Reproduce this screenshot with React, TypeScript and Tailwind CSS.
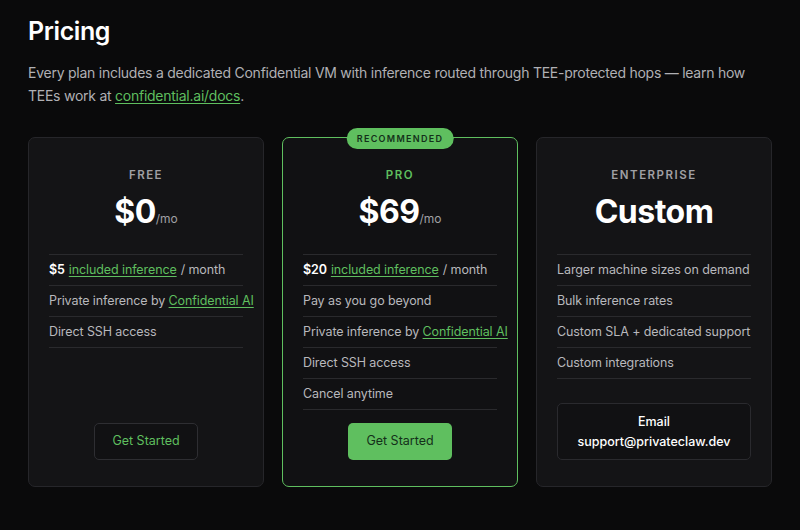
import React from "react";

const G = "text-[#5fbf5f]";

function Row({ children }: { children: React.ReactNode }) {
  return (
    <div className="border-b border-[#2a2a2d] h-[31px] leading-[30px] whitespace-nowrap text-[12.5px] tracking-[-0.1px] text-[#b8b8bc]">
      {children}
    </div>
  );
}

function Link({ children }: { children: React.ReactNode }) {
  return <span className={`${G} underline underline-offset-2`}>{children}</span>;
}

export default function App() {
  return (
    <div className="w-[800px] h-[530px] bg-[#0a0a0b] px-[28px] pt-[14px] overflow-hidden" style={{ fontFamily: "Inter, 'Noto Sans', sans-serif" }}>
      <h1 className="text-[25px] font-semibold text-white tracking-[-0.4px] leading-[34px]">Pricing</h1>
      <p className="mt-[13px] text-[14px] tracking-[-0.25px] text-[#b0b0b4] leading-[23px]">
        Every plan includes a dedicated Confidential VM with inference routed through TEE-protected hops — learn how TEEs work at{" "}
        <Link>confidential.ai/docs</Link>.
      </p>
      <div className="mt-[30px] grid grid-cols-3 gap-[18px]">
        {/* FREE */}
        <div className="h-[350px] rounded-[7px] border border-[#26262a] bg-[#141416] px-[20px] pt-[29px] pb-[26px] flex flex-col">
          <div className="text-center text-[11.5px] font-semibold tracking-[1.5px] text-[#a0a0a4]">FREE</div>
          <div className="text-center mt-[4px] h-[44px] text-white"><span className="text-[32px] font-bold tracking-[-0.5px]">$0</span><span className="text-[12px] text-[#a0a0a4]">/mo</span></div>
          <div className="mt-[22px] border-t border-[#2a2a2d]">
            <Row><span className="text-white font-semibold mr-1">$5</span><Link>included inference</Link><span className="ml-1">/ month</span></Row>
            <Row>Private inference by <Link>Confidential AI</Link></Row>
            <Row>Direct SSH access</Row>
          </div>
          <div className="mt-auto flex justify-center">
            <div className="w-[104px] h-[37px] rounded-[5px] border border-[#2e2e32] bg-[#111113] flex items-center justify-center text-[12.5px] text-[#5fbf5f]">Get Started</div>
          </div>
        </div>
        {/* PRO */}
        <div className="relative h-[350px] rounded-[7px] border border-[#5fbf5f] bg-[#111113] px-[20px] pt-[29px] pb-[26px] flex flex-col">
          <div className="absolute left-1/2 -translate-x-1/2 -top-[10px] h-[21px] px-[10px] rounded-full bg-[#5fbf5f] text-[9px] font-semibold tracking-[1.3px] text-[#14301a] flex items-center">RECOMMENDED</div>
          <div className={`text-center text-[11.5px] font-semibold tracking-[1.5px] ${G}`}>PRO</div>
          <div className="text-center mt-[4px] h-[44px] text-white"><span className="text-[32px] font-bold tracking-[-0.5px]">$69</span><span className="text-[12px] text-[#a0a0a4]">/mo</span></div>
          <div className="mt-[22px] border-t border-[#2a2a2d]">
            <Row><span className="text-white font-semibold mr-1">$20</span><Link>included inference</Link><span className="ml-1">/ month</span></Row>
            <Row>Pay as you go beyond</Row>
            <Row>Private inference by <Link>Confidential AI</Link></Row>
            <Row>Direct SSH access</Row>
            <Row>Cancel anytime</Row>
          </div>
          <div className="mt-auto flex justify-center">
            <div className="w-[104px] h-[37px] rounded-[5px] bg-[#5fbf5f] flex items-center justify-center text-[12.5px] text-[#14301a]">Get Started</div>
          </div>
        </div>
        {/* ENTERPRISE */}
        <div className="h-[350px] rounded-[7px] border border-[#26262a] bg-[#141416] px-[20px] pt-[29px] pb-[26px] flex flex-col">
          <div className="text-center text-[11.5px] font-semibold tracking-[1.5px] text-[#a0a0a4]">ENTERPRISE</div>
          <div className="text-center mt-[4px] h-[44px] text-white"><span className="text-[32px] font-bold tracking-[-0.5px]">Custom</span></div>
          <div className="mt-[22px] border-t border-[#2a2a2d]">
            <Row>Larger machine sizes on demand</Row>
            <Row>Bulk inference rates</Row>
            <Row>Custom SLA + dedicated support</Row>
            <Row>Custom integrations</Row>
          </div>
          <div className="mt-auto h-[57px] rounded-[5px] border border-[#2a2a2e] bg-[#111113] flex flex-col items-center justify-center text-[12.5px] text-white leading-[20px]">
            <span className="font-medium">Email</span>
            <span className="font-medium">support@privateclaw.dev</span>
          </div>
        </div>
      </div>
    </div>
  );
}
